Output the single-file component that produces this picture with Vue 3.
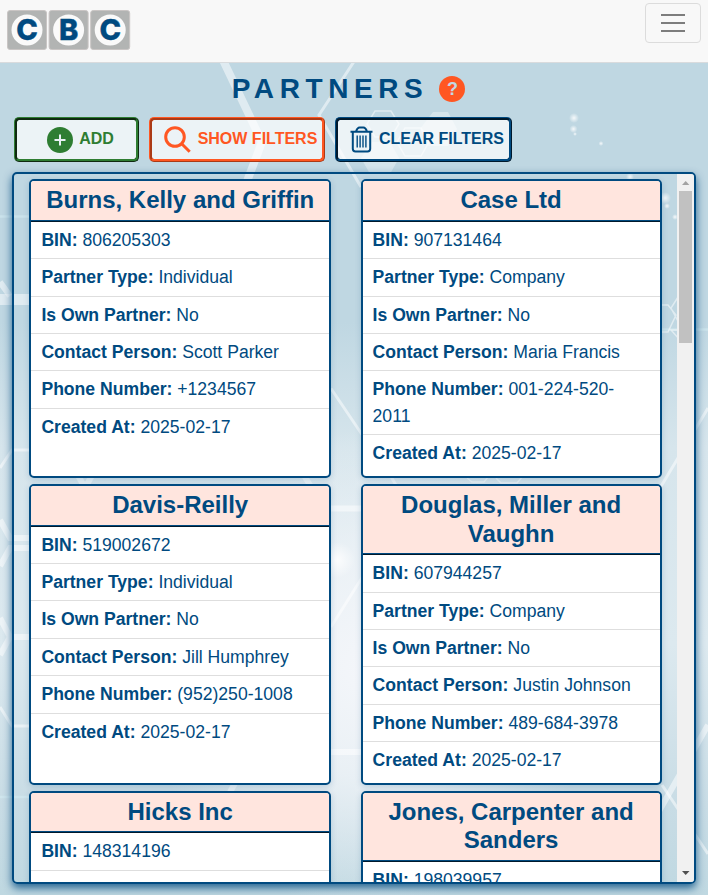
<script setup>
const rows = (bin, type, person, phone) => [
  ['BIN', bin], ['Partner Type', type], ['Is Own Partner', 'No'],
  ['Contact Person', person], ['Phone Number', phone], ['Created At', '2025-02-17'],
]
const partners = [
  { name: 'Burns, Kelly and Griffin', rows: rows('806205303', 'Individual', 'Scott Parker', '+1234567') },
  { name: 'Case Ltd', rows: rows('907131464', 'Company', 'Maria Francis', '001-224-520-2011') },
  { name: 'Davis-Reilly', rows: rows('519002672', 'Individual', 'Jill Humphrey', '(952)250-1008') },
  { name: 'Douglas, Miller and Vaughn', rows: rows('607944257', 'Company', 'Justin Johnson', '489-684-3978') },
  { name: 'Hicks Inc', rows: [['BIN', '148314196'], ['Partner Type', '']] },
  { name: 'Jones, Carpenter and Sanders', rows: [['BIN', '198039957']] },
]
</script>

<template>
  <div class="page">
    <svg class="backdrop" viewBox="0 63 708 832" fill="none" stroke="#fff">
      <defs>
        <radialGradient id="spark"><stop offset="0" stop-color="#fff" stop-opacity=".85" /><stop offset="1" stop-color="#fff" stop-opacity="0" /></radialGradient>
      </defs>
      <g stroke-opacity=".5">
        <path stroke-width="8" d="M222 58L262 142 246 184" />
        <path stroke-width="11" d="M0 299.5H90" />
        <path stroke-width="6" d="M0 282l10 14M331 508.6h32M331 752h32M0 520l10 18h20M0 566l10-18h20M0 618l10 19h20M0 655l10-18M75 470l10 18 10-18M303 474l14 22M230 792l8-14M654 820l54-95" />
        <path stroke-width="3" d="M355 60L319 115 361 187M331 388.5L363 436M331 627l32-51M0 468l12-18h18M0 707l12 19h18M662 785l46 69M654 498l54-90M386 468l14 24" />
        <path stroke-width="2.5" stroke="#d5edf3" d="M0 216.5h30M0 797h30M662 329.5h46" />
        <path stroke-width="1.5" d="M375 111h16l8 13-8 13h-16l-8-13zM397 142l8-14h16l8 14-8 14h-16zM660 305h8l8 10-8 17h-8M680 294l-9 14 9 17M680 330l-9 0 9 10M467 478l5 4h12l5-6M496 478l5 5h16l6-7" />
      </g>
      <path fill="#fff" fill-opacity=".35" stroke="none" d="M433 112h15l9 17-9 17h-20l-8-17zM372 142h18l9 16-9 16h-20l-9-16z" />
      <g fill="url(#spark)" stroke="none"><circle cx="574" cy="118" r="5" /><circle cx="573.5" cy="129" r="4" /><circle cx="575" cy="134" r="2" /><circle cx="601" cy="143.5" r="2.5" /><circle cx="630" cy="177" r="4" /><circle cx="665" cy="198" r="6" /><circle cx="667" cy="206" r="3" /><circle cx="675" cy="217" r="3" /><circle cx="337" cy="560" r="18" /></g>
    </svg>
    <nav>
      <svg class="logo" width="124" height="41" viewBox="0 0 124 41">
        <g v-for="(c, i) in ['C', 'B', 'C']" :key="i" :transform="`translate(${i * 41.6} 0)`">
          <rect x=".5" y=".5" width="39" height="39" rx="2.5" fill="#b2b4b3" stroke="#c9c5c4" />
          <circle cx="20" cy="20" r="15.5" fill="#fafafa" />
          <text x="20" y="30.3" text-anchor="middle">{{ c }}</text>
        </g>
      </svg>
      <button class="toggle"><span /><span /><span /></button>
    </nav>
    <header>
      <h1>PARTNERS</h1><span class="help">?</span>
    </header>
    <div class="actions">
      <button class="add">
        <svg width="26" height="26" viewBox="0 0 26 26"><circle cx="13" cy="13" r="13" fill="#2e7d32" /><path d="M13 7.5v11M7.5 13h11" stroke="#eaf1f5" stroke-width="2" /></svg><span>ADD</span>
      </button>
      <button class="show">
        <svg width="27" height="27" viewBox="0 0 27 27" fill="none" stroke="#ff5722" stroke-width="3"><circle cx="11" cy="11" r="9.3" /><path d="M17.7 17.7l8 8" /></svg><span>SHOW FILTERS</span>
      </button>
      <button class="clear">
        <svg width="23" height="27" viewBox="0 0 23 27" fill="none" stroke="#004a80" stroke-width="2"><path d="M.5 5.7h22M6 5.5q1.5-4 3.5-4h4q2 0 3.5 4M2.8 6v16.8a2.7 2.7 0 0 0 2.7 2.7h12a2.7 2.7 0 0 0 2.7-2.7V6" /><path stroke-width="1.4" d="M7.2 9.5v12M10.1 9.5v12M13 9.5v12M15.9 9.5v12" /></svg><span>CLEAR FILTERS</span>
      </button>
    </div>
    <main>
      <div class="cards">
        <article v-for="p in partners" :key="p.name">
          <h2>{{ p.name }}</h2>
          <p v-for="r in p.rows" :key="r[0]"><b>{{ r[0] }}:</b> {{ r[1] }}</p>
        </article>
      </div>
      <div class="scroll">
        <svg width="17" height="17"><path d="M5 11l3.7-4 3.7 4z" fill="#a3a3a3" /></svg>
        <div class="thumb" />
        <svg class="down" width="17" height="17"><path d="M5 6h7.5L8.7 10z" fill="#505050" /></svg>
      </div>
    </main>
  </div>
</template>

<style>
body { margin: 0; overflow: hidden; }
</style>
<style scoped>
* { box-sizing: border-box; }
.page { position: relative; isolation: isolate; height: 895px; display: flex; flex-direction: column; color: #004a80; font-family: "Liberation Sans", Arial, sans-serif; background: radial-gradient(ellipse 230px 240px at 370px 670px, #f4f6fa 0%, #f0f4f8cc 45%, #e4edf200 100%), linear-gradient(#bfd7e2 0 36%, #d6e5ec 50%, #dce9ef 72%, #c8dce5 90%, #bfd8e1 100%); }
.backdrop { position: absolute; z-index: -1; top: 63px; left: 0; width: 708px; height: 832px; }
nav { height: 63px; flex: none; background: #f8f8f8; border-bottom: 1px solid #d9dbdd; display: flex; justify-content: space-between; align-items: flex-start; padding: 3px 7px 0; }
.logo { margin-top: 7px; }
.logo text { font: 800 29px Inter, sans-serif; fill: #004a80; stroke: #004a80; stroke-width: .4px; }
.toggle { width: 56px; height: 40px; border: 1px solid #dcdcdc; border-radius: 4px; background: transparent; display: flex; flex-direction: column; gap: 6px; align-items: center; justify-content: center; padding: 0; }
.toggle span { width: 24px; height: 2px; background: #7d7d7d; }
header { height: 54px; flex: none; display: flex; align-items: center; justify-content: center; padding: 0 11px 2px 0; }
h1 { margin: 0; font-size: 28px; letter-spacing: 5.6px; line-height: 34px; }
.help { width: 26px; height: 26px; margin-left: 11px; border-radius: 50%; background: #ff5722; color: #c3d8e2; text-align: center; font: bold 18px/27px "Liberation Sans", sans-serif; }
.actions { display: flex; gap: 10px; padding-left: 14px; height: 45px; flex: none; }
.actions button { height: 45px; border: 3px ridge; border-radius: 5px; background: rgba(255,255,255,.7); font: bold 16px "Liberation Sans", sans-serif; display: flex; align-items: center; justify-content: center; padding: 0 0 0 8px; gap: 6px; white-space: nowrap; }
.actions button span { padding-bottom: 2px; }
.actions .add { width: 125px; color: #2e7d32; border-color: #2e7d32; }
.actions .show { width: 176px; color: #ff5722; border-color: #ff5722; gap: 7px; padding-left: 7px; }
.actions .clear { width: 177px; color: #004a80; border-color: #004a80; padding-left: 7px; }
main { margin: 10px 12px 0; height: 712px; flex: none; border: 2px solid #004a80; border-radius: 5px; display: flex; justify-content: space-between; overflow: hidden; box-shadow: 0 4px 9px #004a80d0; }
.cards { padding: 5.3px 0 0 15.4px; display: grid; grid-template-columns: 301.6px 301px; column-gap: 29.6px; row-gap: 6px; grid-template-rows: 298.8px 300.8px 300px; }
article { border: 2px solid #004a80; border-radius: 5px; background: #fff; overflow: hidden; box-shadow: 0 2px 6px #004a8030; }
h2 { margin: 0; padding: 5px 10px; background: #ffe5de; border-bottom: 2px ridge #004a80; text-align: center; font-size: 24px; line-height: 28.5px; }
p { margin: 0; padding: 5px 10px; border-bottom: 1px solid #dedede; font-size: 17.6px; line-height: 26.4px; }
p:last-child { border: 0; }
.scroll { width: 17px; background: #f1f1f1; display: flex; flex-direction: column; align-items: center; }
.scroll svg { display: block; flex: none; }
.thumb { width: 13px; height: 152px; background: #c1c1c1; }
.down { margin-top: auto; }
</style>
